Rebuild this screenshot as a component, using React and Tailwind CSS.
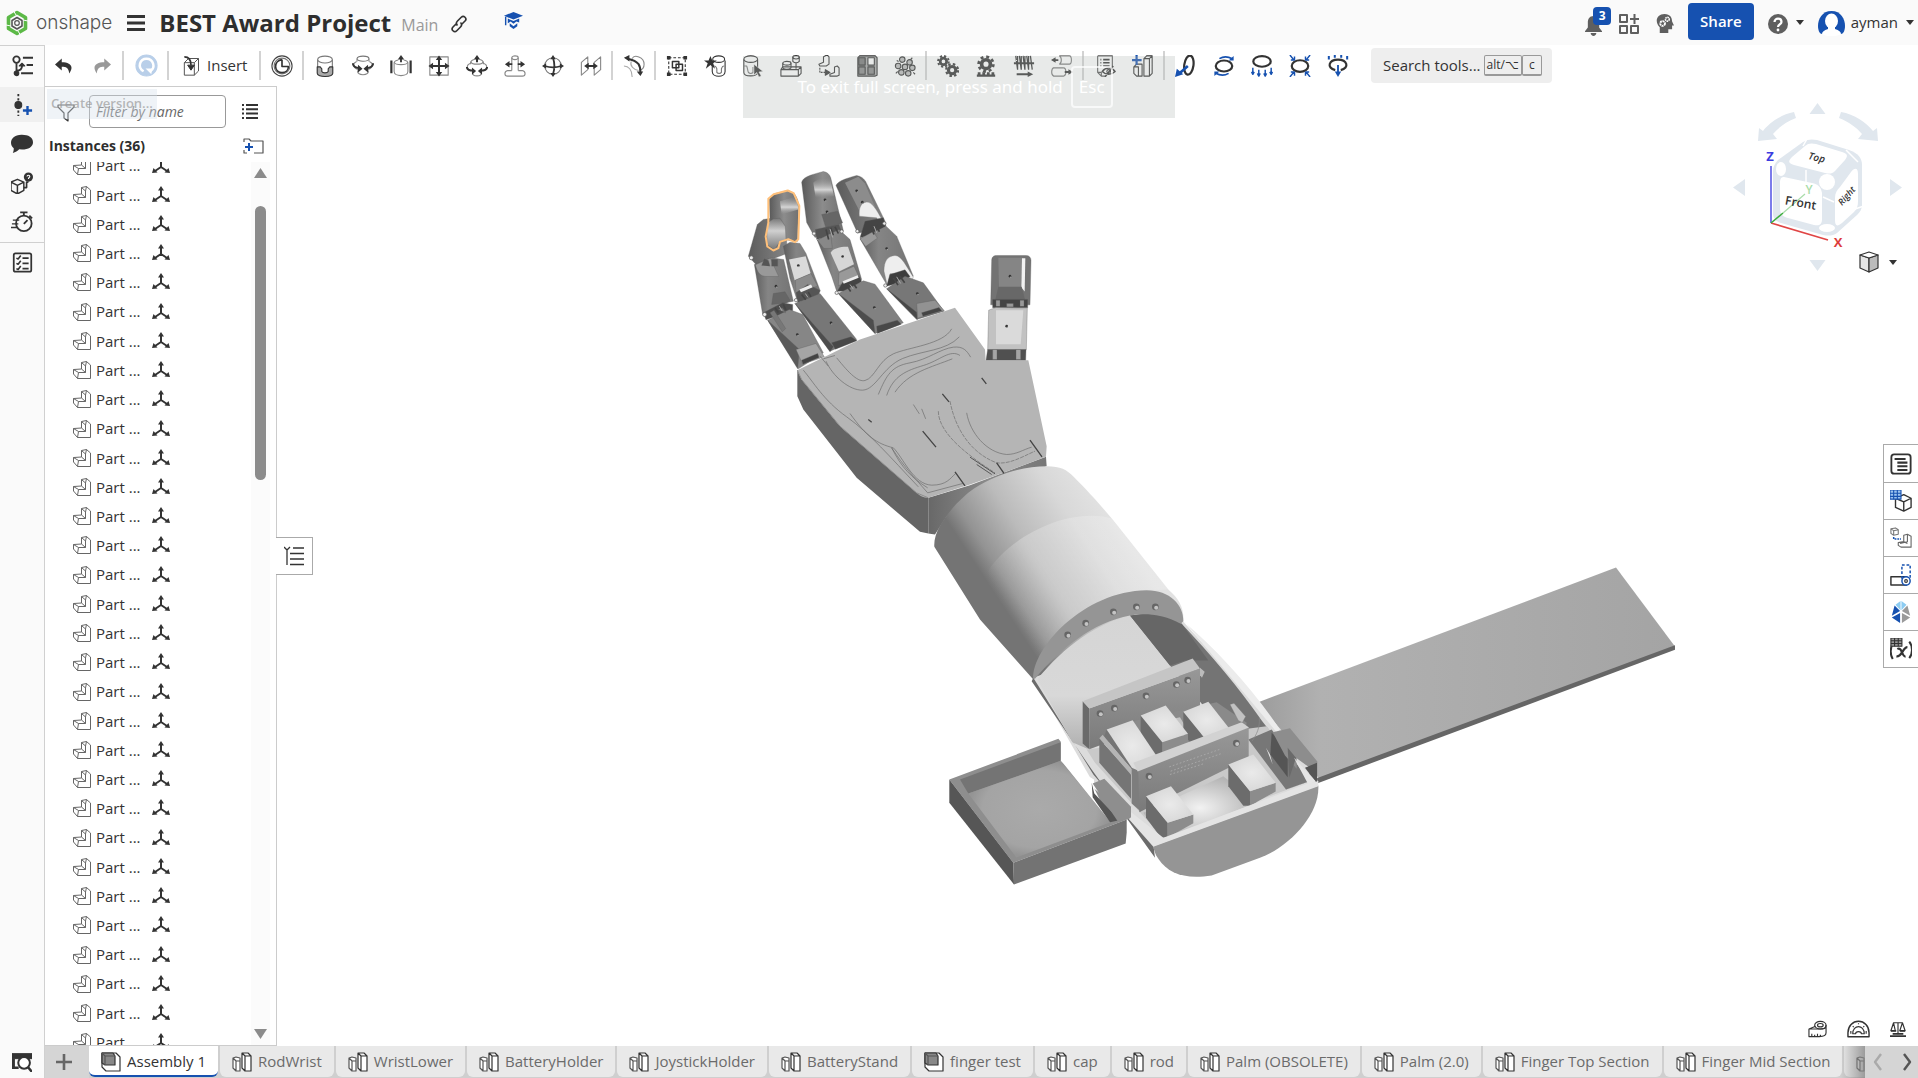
import React, { useState } from 'react';

const INK = '#333333';
const BLUE = '#1651b0';

const Svg = ({ children, className = 'size-6', box = '0 0 24 24' }) => (
  <svg
    viewBox={box}
    className={`shrink-0 ${className}`}
    fill="none"
    stroke={INK}
    strokeWidth="1.2"
    strokeLinejoin="round"
    aria-hidden="true"
  >
    {children}
  </svg>
);

const Caret = () => (
  <svg viewBox="0 0 8 5" className="h-[5px] w-2 shrink-0" fill={INK} aria-hidden="true">
    <path d="M0 0h8L4 5z" />
  </svg>
);

/* Toolbar icons */
const tools = [
  [
    ['Mate', <><circle cx="12" cy="12" r="11" stroke="#444" /><circle cx="12" cy="12" r="8.600" stroke="#777" /><path d="M12 5v7.500h7c0 9-14 9-14 0 0-4 3-7 7-7.500" strokeWidth="1.800" /></>],
  ],
  [
    ['Fastened mate', <><path d="M4 5v14c0 5 16 5 16 0V5" fill="#fff" stroke="#777" /><ellipse cx="12" cy="5" rx="8" ry="3.800" fill="#fff" stroke="#777" /><path d="M3.500 13h3c1 0 1 1.500 2 2v3c1 2 6 2 7 0v-3c1-.5 1-2 2-2h3v7c0 4.500-17 4.500-17 0z" fill="#aaa" /></>],
    ['Revolute mate', <><ellipse cx="12" cy="4" rx="6.500" ry="2.800" stroke="#777" /><path d="M5.500 4v3M18.500 4v3M6 17c0 6 12 6 12 0" stroke="#888" /><path d="M5 7c-6 3-3 8 3 9M19 7c6 3 3 8-3 9" stroke="#888" /><path d="M1 9c0 3 3 5 7 5.500M23 9c0 3-3 5-7 5.500" strokeWidth="2.200" /><path d="M6.500 10.500l5 4.500-5 4zM17.500 10.500l-5 4.500 5 4z" fill={INK} stroke="none" /></>],
    ['Slider mate', <><path d="M1.500 6v14M22.500 6v14" strokeWidth="2.400" /><path d="M4.500 8v10c0 6 15 6 15 0V8" stroke="#888" /><path d="M9 5.500c-6 1-6 5 3 5s9-4 3-5" stroke="#888" /><path d="M12 8V3" strokeWidth="2" /><path d="M12 0l3.500 5h-7z" fill={INK} stroke="none" /></>],
    ['Planar mate', <><path d="M2 2h20v20H2z" stroke="#888" /><path d="M12 5v14M5 12h14" strokeWidth="2.200" /><path d="M12 .5l3.500 5h-7zM12 23.500l3.500-5h-7zM.5 12l5-3.500v7zM23.500 12l-5-3.500v7z" fill={INK} stroke="none" /></>],
    ['Cylindrical mate', <><path d="M9 5c-5 1-5 5 3 5s8-4 3-5M5 7v3M19 7v3M7 19c0 5 10 5 10 0" stroke="#888" /><path d="M5 9c-6 2-4 8 3 8M19 9c6 2 4 8-3 8" stroke="#888" /><path d="M1 13c0 3 4 4 7 4M23 13c0 3-4 4-7 4M12 8V3" strokeWidth="2.200" /><path d="M12 0l3.500 5h-7zM6.500 13.500l4.500 4-4.500 4zM17.500 13.500l-4.500 4 4.500 4z" fill={INK} stroke="none" /></>],
    ['Pin slot mate', <><path d="M8.500 3v14M15.500 3v14M8.500 17H4c-4 1-4 6 0 6h16c4 0 4-5 0-6h-4.500" stroke="#888" /><ellipse cx="12" cy="3" rx="3.500" ry="2" stroke="#888" /><path d="M4 10h5M15 10h5" strokeWidth="2" /><path d="M1 10l5-3.500v7zM23 10l-5-3.500v7z" fill={INK} stroke="none" /></>],
    ['Ball mate', <><circle cx="12" cy="12" r="9" stroke="#777" /><path d="M12 3c2 6 2 12 0 18M3 12c6 2 12 2 18 0" strokeWidth="2" /><path d="M12 0l3 4.500H9zM12 24l3-4.500H9zM0 12l4.500-3v6zM24 12l-4.500-3v6z" fill={INK} stroke="none" /></>],
    ['Parallel mate', <><path d="M1.500 8l7-6v14l-7 6zM15.500 8l7-6v14l-7 6z" stroke="#888" /><path d="M8 12h8" strokeWidth="2.200" /><path d="M4.500 12l5-3.500v7zM19.500 12l-5-3.500v7z" fill={INK} stroke="none" /></>],
  ],
  [
    ['Tangent mate', <><path d="M1 12c5 0 9 4 9 12M9 7c-2 5 3 9 8 10" stroke="#aaa" /><path d="M10 4c2-5 13-2 13 6 0 4-2 6-5 6" stroke="#888" /><path d="M5 4c5 1 9 2 12 6 2 3 2 7 2 9" strokeWidth="2.200" /><path d="M1 3l6-3v7zM19 23l-4-5h7z" fill={INK} stroke="none" /></>],
  ],
  [
    ['Group', <><path d="M3 3h18v18H3z" strokeDasharray="3 2" /><path d="M7 7h7v7H7zM11 10h7v7h-7z" strokeWidth="1.600" /><path d="M1 1h4v4H1zM19 1h4v4h-4zM1 19h4v4H1zM19 19h4v4h-4z" fill={INK} stroke="none" /></>],
    ['Mate connector', <><path d="M9 6v12c0 7 14 7 14 0V6" /><ellipse cx="16" cy="4.500" rx="6.500" ry="3.500" /><path d="M11 12c3 0 2 2 3 3v4c1 1.500 4 1.500 5 0v-4c1-1 0-3 3-3" stroke="#777" /><path d="M7 1l2 5h5l-4 3 2 6-5-4-5 4 2-6-4-3h5z" fill={INK} stroke="none" /></>],
    ['Select', <><path d="M2 5v14c0 5 15 5 15 0V5" /><ellipse cx="9.500" cy="4.500" rx="7.500" ry="3.500" /><path d="M2 12h3c1 1 1 5 2 7 1 1.500 4 1.500 5 0v-6" stroke="#777" /><path d="M13 10l10 8-4.500.5L21 23l-2.500 1-2.500-5-3 3z" fill={INK} stroke="#fff" strokeWidth=".6" /></>],
    ['Snap mode', <><path d="M1 16l2-3h20v3M1 16h19v7H1zM20 16l3-3v7l-3 3" /><path d="M3 9v5c2 2 7 2 9 0V9" /><ellipse cx="7.500" cy="9" rx="4.500" ry="2" /><path d="M14 2v5c2 2 5 2 7 0V2M17.500 9v6" /><ellipse cx="17.500" cy="2.500" rx="3.500" ry="1.800" /></>],
    ['Replicate', <><path d="M1 10l5-2V2l4-2 2 2v8l-3 2H2zM13 21l5-2v-6l3-1 2 2v8l-2 1h-8z" /><path d="M2 14v5h7" strokeDasharray="2 1" /><path d="M13 19l-5-3v6z" fill={INK} /></>],
    ['Pattern', <><path d="M2 3l2-2h17l2 2v19l-2 1H2z" fill="#aaa" /><path d="M3 3h7v8H3z" fill="#777" /><path d="M13 3h7v8h-7z" fill="#fff" /><path d="M3 13h7v8H3zM13 13h7v8h-7z" fill="#888" /></>],
    ['Exploded view', <><g fill="#bbb"><circle cx="9" cy="5" r="3" /><circle cx="17" cy="8" r="3" /><circle cx="4.500" cy="12" r="3" /><circle cx="12" cy="13" r="3" /><circle cx="20" cy="14" r="3" /><circle cx="8" cy="19" r="3" /><circle cx="15.500" cy="20" r="3" /></g><path d="M3 6l2 1M20 3l-2 2M21 19l2 2M2 20l2-2" /></>],
  ],
  [
    ['Gear relation', <><circle cx="7" cy="7" r="3.500" strokeWidth="3" /><circle cx="7" cy="7" r="5.800" strokeWidth="2.200" strokeDasharray="2.400 2.150" /><circle cx="16.500" cy="16.500" r="4" strokeWidth="3.400" /><circle cx="16.500" cy="16.500" r="6.500" strokeWidth="2.400" strokeDasharray="2.700 2.400" /></>],
    ['Rack and pinion relation', <><circle cx="12" cy="10" r="4.800" strokeWidth="4" /><circle cx="12" cy="10" r="8" strokeWidth="3" strokeDasharray="3.200 3.080" /><path d="M2 22.500h20M3 20h3M8 20h3M13 20h3M18 20h3" strokeWidth="2.500" /></>],
    ['Screw relation', <><path d="M3 1l2 15M7 1l2 15M11 1l2 15M15 1l2 15M19 1l2 15M5 1v15M9 1v15M13 1v15M17 1v15" strokeWidth="1.400" /><path d="M1 9h22M4 21h14" strokeWidth="2" /><path d="M22 21l-6-3v6z" fill={INK} stroke="none" /></>],
    ['Linear relation', <><path d="M9 1h11c3 0 3 9 0 9H9M9 1c3 1 3 8 0 9M2 14h12M2 23h12M3 14c-3 1-3 8 0 9M14 14c3 1 3 8 0 9" stroke="#777" /><path d="M2 5.500h6M15 18.500h6" strokeWidth="2" /><path d="M0 5.500l5-3v6zM24 18.500l-5-3v6z" fill={INK} stroke="none" /></>],
  ],
  [
    ['Bill of materials', <><path d="M4 1h16v13M4 1v18l4 4h5M4 19h4v4" stroke="#555" /><path d="M7 5h1M10 5h7M7 8.500h1M10 8.500h7M7 12h1M10 12h7" strokeWidth="1.800" /><path d="M9 18c4-5 10-5 14 0-4 4-10 4-14 0zM12 24l9-12" strokeWidth="1.600" /><circle cx="16" cy="18" r="2" /></>],
    ['Insert part studio', <><path d="M2 13l3-3h6v13H5l-3-3zM2 13h5v10M13 4l3-3h6v19l-3 3h-6zM13 4h6v19M19 4l3-3" fill="#fff" /><path d="M5 0v11M-.5 5.500h11" stroke={BLUE} strokeWidth="2.400" /></>],
  ],
  [
    ['Section view', <><ellipse cx="15" cy="11" rx="5" ry="10.500" transform="rotate(8 15 12)" strokeWidth="2.400" /><path d="M14 12L5 20" stroke={BLUE} strokeWidth="2.800" /><path d="M0 24l2-9 7 6z" fill={BLUE} stroke="none" /></>],
    ['Rotate view', <><ellipse cx="12" cy="12" rx="9" ry="6" strokeWidth="2.400" /><path d="M7 4c5-3 10-2 14 0M17 20c-5 3-10 2-14 0" stroke={BLUE} strokeWidth="1.800" /><path d="M22.500 1v5h-5.500zM1.500 23v-5H7z" fill={BLUE} stroke="none" /></>],
    ['Gravity', <><ellipse cx="12" cy="7" rx="9.500" ry="5.800" strokeWidth="2.400" /><path d="M2 14v7M8.500 16v7M15.500 16v7M22 14v7M.5 18.500L2 21l1.500-2.500M7 20l1.500 3 1.500-3M14 20l1.500 3 1.500-3M20.500 18.500L22 21l1.500-2.500" stroke={BLUE} strokeWidth="1.600" /></>],
    ['Compress', <><ellipse cx="12" cy="12" rx="9" ry="6.300" strokeWidth="2.400" /><path d="M1 0l4 5M23 0l-4 5M1 24l4-5M23 24l-4-5M2 5.500h4V1.500M22 5.500h-4V1.500M2 18.500h4v4M22 18.500h-4v4" stroke={BLUE} strokeWidth="1.600" /></>],
    ['Force', <><path d="M9 16.500C-1 14 2 5 12 5s13 9 3 11.500" strokeWidth="2.400" /><path d="M2 1v4M8.500 0v3M15.500 0v3M22 1v4" stroke={BLUE} strokeWidth="2.200" /><path d="M12 11v9" stroke={BLUE} strokeWidth="2" /><path d="M12 24l-3.500-6h7z" fill={BLUE} stroke="none" /></>],
  ],
];

const Separator = () => <span className="ml-px mr-0.5 h-[29px] w-0.5 shrink-0 bg-[#d3d3d3]" />;

const ToolButton = ({ label, children, className = 'w-[38px] justify-center' }) => (
  <button type="button" aria-label={label} className={`flex h-9 shrink-0 items-center ${className}`}>
    {children}
  </button>
);

const Header = () => (
  <header className="flex h-[45px] shrink-0 items-center justify-between bg-[#fafafa] pl-1.5 pr-1">
    <div className="flex items-center">
      <a href="#home" className="flex items-center gap-2">
        <Svg className="h-[26px] w-[22px]" box="0 0 22 26">
          <path d="M11 2.500l8.500 5v11L11 23.500 2.500 18.500v-11z" stroke="#5cb947" strokeWidth="3.600" />
          <path d="M0 15l5 1M17 10l5 1M7 0l3 5M12 21l3 5" stroke="#fafafa" strokeWidth="1" />
          <path d="M11 7.500l5 3v5.500l-5 3-5-3v-5.500z" stroke="#555" strokeWidth="1.600" />
          <circle cx="11" cy="13" r="2.300" stroke="#555" strokeWidth="1.200" />
        </Svg>
        <span className="font-['Inter'] text-[19px] font-light leading-6 text-[#555]">onshape</span>
      </a>
      <button type="button" aria-label="Document menu" className="ml-[15px]">
        <Svg className="h-[18px] w-[18px]" box="0 0 18 18">
          <path d="M0 2.500h18M0 9h18M0 15.500h18" strokeWidth="3" />
        </Svg>
      </button>
      <h1 className="ml-3.5 text-2xl font-bold text-[#2e2e2e]">BEST Award Project</h1>
      <span className="ml-2.5 mt-1 text-base text-[#999]">Main</span>
      <button type="button" aria-label="Copy link" className="ml-3 mt-0.5">
        <Svg className="size-[18px]">
          <path d="M10 14c-2-2-2-4 0-6l5-5c2-2 4-1 5 0s2 3 0 5l-4 4M14 10c2 2 2 4 0 6l-5 5c-2 2-4 1-5 0s-2-3 0-5l4-4" strokeWidth="2.200" />
        </Svg>
      </button>
      <button type="button" aria-label="Learning center" className="ml-9 pb-1">
        <Svg className="size-[19px]" box="0 0 20 20">
          <g fill={BLUE} stroke="none">
            <path d="M10 1l10 4-10 4L0 5z" />
            <path d="M4 8l6 2.500L16 8v4l-3-1-3 2.500L7 11l-3 2zM6 13l4 3 4-3v3l-4 3-4-3zM1 6h1.500v9H1z" />
          </g>
        </Svg>
      </button>
    </div>
    <div className="flex items-center text-[#333]">
      <button type="button" aria-label="Notifications" className="relative mr-2 h-7 w-[26px]">
        <svg viewBox="0 0 18 22" className="mt-1.5 h-[21px] w-[17px]" fill="#5f5f5f" aria-hidden="true">
          <path d="M9 1c4 0 6 3 6 7v5l3 4v1H0v-1l3-4V8c0-4 2-7 6-7zM6 19h6c0 4-6 4-6 0z" />
        </svg>
        <span className="absolute -top-0.5 left-2 flex h-[18px] w-[18px] items-center justify-center rounded-sm bg-[#1651b0] text-xs font-bold text-white">
          3
        </span>
      </button>
      <button type="button" aria-label="App switcher" className="mr-4 mt-0.5">
        <Svg className="size-5" box="0 0 20 20">
          <path d="M1 1h7v7H1zM1 12h7v7H1zM12 12h7v7h-7zM15.500 0v10M11 5h9" stroke="#5f5f5f" strokeWidth="2" />
        </Svg>
      </button>
      <button type="button" aria-label="AI advisor" className="mr-3.5 mt-0.5">
        <Svg className="h-[21px] w-[19px]" box="0 0 20 22">
          <path d="M5 21v-6C-1 9 2 1 10 1c6 0 8 4 8 8l2 4h-2v4h-4v4z" fill="#5f5f5f" stroke="none" />
          <circle cx="8" cy="11" r="2.500" stroke="#fff" strokeWidth="2" strokeDasharray="2 .6" />
          <circle cx="13" cy="6.500" r="2" stroke="#fff" strokeWidth="1.600" strokeDasharray="1.600 .5" />
        </Svg>
      </button>
      <button type="button" className="mb-0.5 h-[37px] rounded bg-[#1651b0] px-3 text-[15px] font-semibold text-white">
        Share
      </button>
      <button type="button" aria-label="Help" className="ml-3.5 flex items-center gap-2">
        <svg viewBox="0 0 20 20" className="mt-0.5 size-5" aria-hidden="true">
          <circle cx="10" cy="10" r="10" fill="#5f5f5f" />
          <path d="M6.500 8c0-4.500 7-4.500 7 0 0 2.500-3.500 2-3.500 5" fill="none" stroke="#fff" strokeWidth="2.200" />
          <circle cx="10" cy="16" r="1.400" fill="#fff" />
        </svg>
        <Caret />
      </button>
      <button type="button" className="ml-3.5 flex items-center">
        <svg viewBox="0 0 27 26" className="mr-1.5 h-[26px] w-[27px]" aria-hidden="true">
          <path d="M13.500 1C23 1 27 9 27 16c0 5-2 8-4 8H4c-2 0-4-3-4-8C0 9 4 1 13.500 1z" fill={BLUE} />
          <ellipse cx="13.500" cy="11" rx="6.500" ry="7.500" fill="#fff" />
          <path d="M10 16h7v3c4 1 6 3 6 5-5 3-14 3-19 0 0-2 2-4 6-5z" fill="#fff" />
        </svg>
        <span className="mr-2 text-[15px]">ayman</span>
        <Caret />
      </button>
    </div>
  </header>
);

const Toolbar = () => (
  <div className="flex h-[41px] items-center overflow-hidden bg-white">
    <ToolButton label="Undo">
      <Svg className="h-[18px] w-5">
        <path d="M9 2L0 10l9 8v-5c6 0 9 1 10 9 7-10 1-15-10-15z" fill={INK} stroke="none" />
      </Svg>
    </ToolButton>
    <ToolButton label="Redo">
      <Svg className="h-[18px] w-5">
        <path d="M15 2l9 8-9 8v-5c-6 0-9 1-10 9C-2 12 4 7 15 7z" fill="#999" stroke="none" />
      </Svg>
    </ToolButton>
    <Separator />
    <ToolButton label="Update" className="w-10 justify-center">
      <Svg className="size-[23px]">
        <circle cx="12" cy="12" r="11" fill="#b9cfe9" stroke="#b9cfe9" />
        <path d="M9 18c-7-4-4-13 3-13s10 9 4 13" stroke="#fff" strokeWidth="2.600" />
        <path d="M11 15h7l-1 6z" fill="#fff" stroke="none" />
      </Svg>
    </ToolButton>
    <Separator />
    <ToolButton label="Insert parts" className="w-[87px] gap-1.5 pl-2.5">
      <Svg className="h-[22px] w-5">
        <path d="M4 8l5-5h12v15l-5 5H4zM4 8h12v15M16 8l5-5" stroke="#555" />
        <path d="M4 1c5 0 8 3 8 10" strokeWidth="2" />
        <path d="M12 17l-4-6h8z" fill={INK} />
      </Svg>
      <span className="text-[15px] text-[#333]">Insert</span>
    </ToolButton>
    {tools.map((group, i) => (
      <React.Fragment key={i}>
        <Separator />
        {group.map(([label, icon]) => (
          <ToolButton key={label} label={label}>
            <Svg className="size-[22px]">{icon}</Svg>
          </ToolButton>
        ))}
      </React.Fragment>
    ))}
    <button type="button" className="ml-3.5 flex h-[35px] shrink-0 items-center gap-[3px] rounded bg-[#eeeeee] pl-3 pr-2.5 text-[#333]">
      <span className="text-[15px]">Search tools...</span>
      <span className="flex text-xs">
        <kbd className="rounded-xs border border-b-2 border-[#999] px-0.5 font-['Open_Sans'] leading-[18px]">alt/⌥</kbd>
        <kbd className="rounded-xs border border-b-2 border-[#999] px-1.5 font-['Open_Sans'] leading-[18px]">c</kbd>
      </span>
    </button>
  </div>
);

const railItems = [
  ['Feature list', <><circle cx="6" cy="5" r="3.500" strokeWidth="2" /><path d="M6 9v13M6 17c5 0 6-2 6-5" strokeWidth="2" /><circle cx="6" cy="20" r="2.500" fill={INK} /><path d="M12 9l3 3h-6z" fill={INK} /><path d="M13 3h11M17 11h7M11 20h13" strokeWidth="2.200" /></>],
  ['Create version', <><path d="M8 0v24" strokeWidth="2" strokeDasharray="2.500 2" /><circle cx="8" cy="12" r="3.700" fill={INK} /><path d="M18 13v10M13 18h10" stroke={BLUE} strokeWidth="2.600" /></>],
  ['Comments', <path d="M12 2c7 0 12 3 12 8s-5 8-12 8l-3-.3c-2 2-4 3-7 4 1-2 1-4 1-5-6-5-3-15 9-14.700z" fill={INK} stroke="none" />],
  ['Help with parts', <><path d="M0 11l7-3 7 3v9l-7 4-7-4zM0 11l7 3.500 7-3.500M7 14.500V24" strokeWidth="1.600" /><path d="M14 17h3v-6h2" strokeWidth="1.800" /><circle cx="19" cy="5.500" r="5" fill={INK} stroke="none" /><path d="M17.500 5c0-2 3-2 3 0 0 1-1.500 1-1.500 2.500" stroke="#fff" /></>],
  ['Performance', <><circle cx="14" cy="13.500" r="8.500" strokeWidth="2" /><path d="M14 14l4-4M10 1.500h8M14 2v3M20 5l3 3" strokeWidth="2" /><path d="M2 10h7M1 14h7M0 18h7" strokeWidth="1.500" /></>],
];

const Rail = () => (
  <nav className="flex w-[45px] shrink-0 flex-col border-r border-t border-[#d0d0d0] bg-[#fafafa]">
    {railItems.map(([label, icon], i) => (
      <div key={label} className="flex h-[39px] items-center">
        <button
          type="button"
          aria-label={label}
          className={`flex h-[35px] w-full items-center justify-center ${i === 1 ? 'bg-[#f0f0f0]' : ''}`}
        >
          <Svg className="size-[22px]">{icon}</Svg>
        </button>
      </div>
    ))}
    <button type="button" aria-label="Checklist" className="mt-px flex h-[39px] items-center justify-center border-t border-[#d0d0d0]">
      <Svg className="size-[21px]">
        <rect x="2" y="1.500" width="20" height="21" rx="2" strokeWidth="2" />
        <path d="M5 7l2 1 3-4M5 13l2 1 3-4M5 19l2 1 3-4M12 7h7M12 13h7M12 19h7" strokeWidth="1.800" />
      </Svg>
    </button>
    <button type="button" aria-label="Tab manager" className="mt-auto flex h-8 items-center justify-center">
      <Svg className="size-5">
        <path d="M0 2h24v6H0z" fill={INK} />
        <path d="M0 3v16h8M2 8v11" strokeWidth="3" />
        <circle cx="14.500" cy="13" r="7" fill="#fff" strokeWidth="2.400" />
        <path d="M19 18l5 6" strokeWidth="3" />
      </Svg>
    </button>
  </nav>
);

const PartRow = () => (
  <li className="flex min-h-[29px] flex-1 items-center pl-7 text-[15px] text-[#333]">
    <Svg className="size-[18px]" box="0 0 18 18">
      <path d="M8.500 1.500l5-1L17.500 4v13.500h-13L.5 13V8.500l8-.5zM8.500 1.500l4 3.500v6.500h-7l-5-3M5.500 11.500l-1 6M12.500 5l1-4.500M12.500 11.500L8.500 8" stroke="#666" strokeWidth="1" />
    </Svg>
    <span className="ml-[5px] w-14">Part ...</span>
    <Svg className="size-[18px]" box="0 0 18 18">
      <path d="M9 3v8M9 10l-6 4M9 10l6 4" strokeWidth="2" />
      <path d="M9 0l3 4.500H6zM0 16l1.500-5 4 4.500zM18 16l-1.500-5-4 4.500z" fill={INK} stroke="none" />
    </Svg>
  </li>
);

const InstancePanel = () => {
  const [filter, setFilter] = useState('');
  return (
    <aside className="relative flex w-[232px] shrink-0 flex-col border-b border-r border-t border-[#cccccc] bg-white">
      <div className="flex h-12 items-center pl-3">
        <Svg className="mt-1 size-[18px]" box="0 0 18 18">
          <path d="M1 1h16v2l-6 6v8l-4-3V9L1 3z" stroke="#333" strokeWidth="1.200" />
        </Svg>
        <label htmlFor="filter" className="sr-only">Filter by name</label>
        <input
          id="filter"
          type="text"
          value={filter}
          onChange={(e) => setFilter(e.target.value)}
          placeholder="Filter by name"
          className="ml-3.5 h-[33px] w-[137px] rounded border border-[#999] bg-white px-1.5 text-sm italic text-[#333] placeholder-[#666] outline-none"
        />
        <button type="button" aria-label="List options" className="ml-4">
          <Svg className="h-[17px] w-4" box="0 0 16 17">
            <path d="M0 2h2M4 2h12M0 6.300h2M4 6.300h12M0 10.600h2M4 10.600h12M0 15h2M4 15h12" strokeWidth="2" />
          </Svg>
        </button>
      </div>
      <div className="mb-1.5 flex h-[21px] items-center justify-between pl-1 pr-3">
        <h2 className="text-sm font-bold text-[#2e2e2e]">Instances (36)</h2>
        <button type="button" aria-label="Add folder">
          <Svg className="h-4 w-[21px]" box="0 0 21 16">
            <path d="M1 4V1h5l2 2h12v12h-9M1 12v3h3" stroke="#555" />
            <path d="M6 5v8M2 9h8" stroke={BLUE} strokeWidth="2" />
          </Svg>
        </button>
      </div>
      <div className="flex min-h-0 flex-1 overflow-hidden">
        <ul className="-mb-3 -mt-[11px] flex flex-1 flex-col">
          {Array.from({ length: 31 }, (_, i) => <PartRow key={i} />)}
        </ul>
        <div className="mr-1.5 flex w-[19px] flex-col items-center bg-[#fbfbfb] py-1.5">
          <svg viewBox="0 0 13 10" className="h-2.5 w-[13px]" fill="#8b8b8b" aria-hidden="true"><path d="M6.500 0L13 10H0z" /></svg>
          <span className="mt-7 h-[274px] w-[11px] rounded-full bg-[#8b8b8b]" />
          <svg viewBox="0 0 13 10" className="mt-auto h-2.5 w-[13px]" fill="#8b8b8b" aria-hidden="true"><path d="M6.500 10L13 0H0z" /></svg>
        </div>
      </div>
      <div className="pointer-events-none absolute left-0.5 top-0.5 flex h-[30px] items-center bg-[#d8e2ea]/40 px-1 text-[13px] font-semibold text-[#999]/70">
        Create version...
      </div>
      <button
        type="button"
        aria-label="Collapse list"
        className="absolute left-full top-[450px] flex h-[38px] w-[37px] items-center justify-center border border-l-0 border-[#aaa] bg-white"
      >
        <Svg className="size-5" box="0 0 20 20">
          <path d="M0 1l3 3 3-3M3 4v15M9 2h11M6 7.500h14M6 13h14M6 18.500h14" strokeWidth="1.300" />
        </Svg>
      </button>
    </aside>
  );
};

/* Shaded 3D model of the prosthetic arm */
const Hole = ({ x, y, r = 10 }) => (
  <g>
    <circle cx={x} cy={y} r={r} fill="#666" />
    <circle cx={x + r / 4} cy={y + r / 4} r={r * 0.6} fill="#c4c4c4" />
  </g>
);

const Pin = ({ x, y }) => (
  <g>
    <circle cx={x} cy={y} r="4" fill="#333" />
    <circle cx={x + 2} cy={y + 3} r="2" fill="#aaa" />
  </g>
);

const Block = ({ x, y, h = 26 }) => (
  <g transform={`translate(${x} ${y})`}>
    <path d={`M0 30L65 110V${110 + h + 18}L45 ${110 + h + 18}L0 95z`} fill="#6c6c6c" />
    <path d={`M65 110L142 85V${85 + h}L65 ${110 + h + 18}z`} fill="#8c8c8c" />
    <path d="M0 30L75 0l67 85-77 25z" fill="url(#blockTop)" />
  </g>
);

const HandModel = () => (
  <g transform="translate(720 150) scale(.33333)">
    <g stroke="#5a5a5a" strokeWidth="1" strokeLinejoin="round">
      {/* little finger */}
      <path d="M112 225l18-15 50-8 20 20 0 90-90 35-25-27z" fill="url(#darkSide)" />
      <path d="M148 150c5-12 12-17 22-19l35-8 17 8c10 14 14 25 14 40l-4 105-35-5-22 10-25-75z" fill="url(#tip)" />
      <path d="M180 155l50-15 5 40-50 15z" fill="url(#shine)" stroke="none" />
      <path d="M140 222l20-14 20-2 16 25 2 40-20 8-15 22-22-16z" fill="url(#tip2)" />
      <path d="M103 345l50-20 38 5 29 125-35 8-57 32z" fill="url(#phal)" />
      <path d="M106 346l45-20 25 55h-35c-20 0-28-10-35-35z" fill="#999" />
      <path d="M125 348l8-20 12 5 5 17M155 350v-20h18v20" fill="#555" />
      <path d="M160 432l35-5 15 25-10 8-45 5z" fill="#666" />
      <path d="M130 490l58-30 30 5 0 18-80 28z" fill="#4d4d4d" />
      <path d="M143 512l65-32 40 15 62 115-75 48z" fill="#868686" />
      <path d="M143 512l95 88-5 58z" fill="#5a5a5a" />
      <path d="M150 490l12-8 35 55-10 10zM175 480l12-5 10 15z" fill="#777" />
      <path d="M228 600l60-18 25 40-65 22z" fill="#a5a5a5" />
      <path d="M245 632l48-20 4 12-48 20z" fill="#444" />
      {/* ring finger */}
      <path d="M190 290l20-12 30 4 18 30 42 110-70 26-20-60z" fill="url(#phal)" />
      <path d="M207 330l50-10 15 52-48 20z" fill="#dadada" stroke="none" />
      <path d="M226 392l47-20 20 38-65 20z" fill="#8c8c8c" />
      <path d="M228 430l35-25 38 18-8 18-60 18z" fill="#555" />
      <path d="M238 420l35-15 5 8-35 15z" fill="#eee" stroke="none" />
      <path d="M225 462l75-30 110 138-80 35z" fill="#777" />
      <path d="M225 462l115 130-10 15z" fill="#4d4d4d" />
      <path d="M335 580l58-18 18 12-65 25z" fill="#484848" />
      {/* middle finger */}
      <path d="M245 98c5-15 20-20 65-32 12 2 18 8 22 18l38 160-35-5-50 25-25-45z" fill="url(#tip)" />
      <path d="M280 100c5-8 25-15 50-15l12 55-55 5z" fill="url(#shine)" stroke="none" />
      <path d="M305 195l48-10 15 35-50 15z" fill="#666" />
      <path d="M290 270l-4-30 70-15 10 25z" fill="#555" />
      <path d="M292 272l65-32 33 30 35 120-75 35-15-45z" fill="url(#phal)" />
      <path d="M292 272l40-20 5 45h-25z" fill="#888" />
      <path d="M332 310c5-15 40-20 52-18l18 52-45 22z" fill="#d6d6d6" stroke="none" />
      <path d="M357 370l45-20 18 40-65 18z" fill="#999" />
      <path d="M352 425l15-25 50-20 8 15-35 30z" fill="#444" />
      <path d="M368 395l45-18 3 8-45 18z" fill="#eee" stroke="none" />
      <path d="M355 432l75-38 35 10 85 116-85 32z" fill="#818181" />
      <path d="M355 432l105 80 5 40z" fill="#4d4d4d" />
      <path d="M470 530l62-18 12 12-72 28z" fill="#484848" />
      {/* index finger */}
      <path d="M348 108c5-12 25-20 62-30 12 2 20 8 27 18l61 125-20 15-65 15z" fill="url(#darkSide)" />
      <path d="M375 100l40-18 20 20 30 70-40 25z" fill="#8c8c8c" stroke="none" />
      <path d="M418 200c-2-25 5-40 20-42 18-2 30 20 52 60l-8 12-12-25z" fill="#eee" stroke="#777" />
      <path d="M420 265l15-50 55-10 8 25-40 25z" fill="#444" />
      <path d="M420 268l78-38 32 30 50 120-30 20-50 5z" fill="url(#phal)" />
      <path d="M420 268l40-22 12 20-35 25z" fill="#999" />
      <path d="M492 365c0-30 10-45 33-47 20 0 35 35 55 65l-10 18-15-30-45 2-8 35z" fill="#eee" stroke="#777" />
      <path d="M500 410l10-35 45-14 15 20-20 15z" fill="#3d3d3d" />
      <path d="M500 418l55-38 55 20 62 85-82 25z" fill="#777" />
      <path d="M500 418l90 70 2 22z" fill="#484848" />
      <path d="M590 462l55-10 28 32-80 22z" fill="#929292" />
      <path d="M605 490l52-16 8 10-56 16z" fill="#444" />
      {/* joint details */}
      <path d="M318 240l8 30M332 235l8 22M345 232l10 20M452 230l10 25M470 225l8 22M520 385l14 22M540 380l14 20M165 475l10 14M190 465l8 16M380 408l12 18M400 402l10 14M245 435l12 16M265 428l8 14" strokeWidth="5" stroke="#444" />
      <path d="M330 238l8 26M462 230l8 20M530 382l12 20M178 470l8 14M390 405l10 14M256 432l8 12" strokeWidth="3" stroke="#aaa" />
      {/* thumb */}
      <path d="M815 335c0-12 5-17 15-17h88c10 0 15 6 15 15l-3 133-118 0z" fill="#737373" />
      <path d="M835 325h75l-8 88h-65z" fill="#858585" stroke="none" />
      <path d="M906 326l10 0-2 100-10-12z" fill="#f2f2f2" stroke="none" />
      <path d="M835 412h70l10 38-90 5z" fill="#686868" stroke="none" />
      <path d="M818 450h105v25H818z" fill="#444" />
      <path d="M828 470v-18h12v18M900 470v-18h12v18M860 472v-10h20v10" fill="#999" />
      <path d="M806 482l22-8 94 2-3 125H803z" fill="#c2c2c2" />
      <path d="M828 482h82l-8 102h-74z" fill="#dadada" stroke="none" />
      <path d="M803 600h115l-1 33H798z" fill="#505050" />
      <path d="M818 600h13v30h-13zM888 600h14v30h-14z" fill="#a5a5a5" />
    </g>
    <Pin x={315} y={151} /><Pin x={321} y={187} /><Pin x={410} y={124} /><Pin x={427} y={158} />
    <Pin x={235} y={348} /><Pin x={368} y={321} /><Pin x={500} y={297} /><Pin x={168} y={410} />
    <Pin x={232} y={555} /><Pin x={333} y={520} /><Pin x={463} y={474} /><Pin x={592} y={432} />
    <Pin x={870} y={380} /><Pin x={860} y={530} />
    <g fill="#eee" stroke="#555" strokeWidth="2">
      <circle cx="94" cy="325" r="6" /><circle cx="134" cy="495" r="6" /><circle cx="228" cy="452" r="5" />
      <circle cx="282" cy="252" r="5" /><circle cx="350" cy="430" r="5" /><circle cx="412" cy="245" r="5" />
      <circle cx="496" cy="408" r="5" /><circle cx="493" cy="222" r="5" /><circle cx="365" cy="246" r="5" />
    </g>
    {/* selected fingertip */}
    <path
      d="M145 148l16-14 42-11 18 8 17 38-3 100-10 9-20-9-25 8-5 19-15 7-18-12-5-30 8-40z"
      fill="none"
      stroke="#ffc07a"
      strokeWidth="6"
      strokeLinejoin="round"
    />
    {/* palm */}
    <path d="M232 662l13 28L360 830l230 200 35 15v107l-25-5-190-162L250 780l-18-40z" fill="#656565" />
    <path d="M625 1045l125-38 228-85 2 28-200 80-100 70-35 55-20-3z" fill="url(#palmFront)" />
    <path d="M232 662l188-92 285-95 90 125 2 32h128l55 258-2 32-128 48-100 35-125 40c-15 0-25-5-35-15L360 830 245 690z" fill="#b5b5b5" />
    <path d="M232 662l13 28 115 140 230 200 35 15" fill="none" stroke="#8e8e8e" strokeWidth="3" />
    <g fill="none" stroke="#6b6b6b" strokeWidth="2">
      <path d="M350 625c40 50 65 73 85 68 30-8 40-60 85-80s150-28 175-75" />
      <path d="M318 635c20 45 70 88 110 87 40-2 60-70 120-95s130-22 170-65" />
      <path d="M475 735c25-60 40-85 95-95s90-42 130-47c30-3 40 10 52 30" />
      <path d="M500 738c20-60 60-75 110-90s80-50 110-30M525 728c40-60 110-75 172-100" />
      <path d="M250 662c30 35 60 90 130 140s130 120 215 210" />
      <path d="M390 792c50 70 80 90 130 103 30 30 60 110 115 112 45 0 55-20 72-35" />
      <path d="M515 895c40 60 60 80 108 135l105-28M515 895c30 60 60 90 108 120" />
      <path d="M655 785c0 70 100 140 170 185M690 755c15 80 60 155 140 185 40 5 80-20 115-35" strokeDasharray="12 3" />
      <path d="M740 790c10 60 60 120 120 125 30 0 50-15 75-22" />
      <path d="M300 620l25 30M310 628l35-10M580 765l18 28M605 778l12 30" />
    </g>
    <g stroke="#444" strokeWidth="4">
      <path d="M667 733l20 24M608 845l40 48M785 685l14 18M930 872l36 50M705 967l30 42M830 940l22 32M445 810l10 8" />
      <path d="M750 923l75 50M770 945l45 30" strokeWidth="2.500" />
    </g>
  </g>
);

const ForearmModel = () => (
  <g transform="translate(900 450) scale(.33333)">
    {/* arm strap */}
    <path d="M1075 758l1073-404 177 237-1065 400z" fill="url(#strap)" />
    <path d="M1250 986l1075-399v14l-1072 400z" fill="#666" />
    {/* sleeve */}
    <path d="M103 292c-5-60 70-140 118-174 70-45 150-68 220-68 40 0 60 10 80 32 50 50 80 85 119 130l165 208c35 30 48 60 45 97L400 690 240 510z" fill="url(#sleeve)" />
    <path d="M262 368c60-100 240-200 378-160l165 212-65 3c-160 0-290 130-335 245z" fill="url(#sleeveLight)" />
    {/* enclosure */}
    <path d="M400 685l450-168 290 320 115 160-110 150-385 45-185-200z" fill="#dcdcdc" />
    <path d="M400 685l-5 10 180 265 190 265-5-40-180-210z" fill="#6b6b6b" />
    <path d="M412 690c80-100 180-170 280-192l120 150 60 60-310 190-45-20z" fill="url(#floor)" />
    <path d="M690 498c60-10 110-5 155 25 90 95 170 190 240 290l143 182-63 22-190-170-165-199z" fill="#747474" />
    <path d="M690 498c60-10 110-5 155 25l80 110-70 0-45 15z" fill="#666" />
    <path d="M855 518l275 330 10-8C1060 720 950 600 850 515z" fill="#ececec" />
    <path d="M560 900l540-70 130 165-445 165-200-220z" fill="#c9c9c9" />
    <path d="M1045 870l70-30 113 155-70 25z" fill="#777" />
    <path d="M730 1090l240-110 100 80-285 110z" fill="url(#glow)" />
    {/* ring face */}
    <path d="M400 688c-5-90 150-264 340-266 70 0 112 45 110 93l-8 8c-50-30-110-33-152-25-110 20-210 100-285 190z" fill="#959595" />
    <Hole x={503} y={556} /><Hole x={557} y={521} /><Hole x={640} y={487} /><Hole x={709} y={472} /><Hole x={766} y={472} />
    {/* rear plate */}
    <path d="M548 755l20 22v122l-20-17z" fill="#6a6a6a" />
    <path d="M568 777l332-120v120L568 899z" fill="url(#plate)" />
    <path d="M548 755l330-128 22 30-332 120z" fill="#c5c5c5" />
    <path d="M900 655l14 12-8 18-6-8z" fill="#bbb" />
    <Hole x={600} y={792} /><Hole x={643} y={776} /><Hole x={738} y={739} /><Hole x={829} y={705} /><Hole x={863} y={692} />
    <path d="M620 860l90-48 240-54 90 62-10 60-310 90z" fill="#8a8a8a" />
    <path d="M820 808l20-5 35 60-22 5z" fill="#c4c4c4" />
    <Block x={850} y={757} /><Block x={722} y={768} />
    <path d="M620 840l82 105v22l-90-105z" fill="#757575" />
    <path d="M620 840l78-28 75 112-70 42z" fill="url(#blockTop)" />
    {/* front plate */}
    <path d="M598 868l95 105v75l-95-108z" fill="#757575" />
    <path d="M598 866l10-10 92 110-7 10z" fill="#b5b5b5" />
    <path d="M695 955l28 12v120l-28-25z" fill="#7d7d7d" />
    <path d="M715 965l331-132v92L718 1088z" fill="url(#plate)" />
    <path d="M700 940l325-122 22 16-334 132z" fill="#d2d2d2" />
    <Hole x={747} y={980} /><Hole x={1009} y={881} />
    <path d="M808 952l150-52M812 965l150-52M810 975l100-32" stroke="#a8a8a8" strokeWidth="3" strokeDasharray="5 6" fill="none" />
    <path d="M990 765l12-4 35 40-10 18-12-6z" fill="#c2c2c2" stroke="#777" />
    <path d="M1078 805c2 30-8 50-22 70" stroke="#888" fill="none" strokeWidth="2" />
    <Block x={985} y={915} /><Block x={738} y={1010} />
    {/* strap hinge */}
    <path d="M1115 850l48 45v88l-52-68z" fill="#555" />
    <path d="M1118 848l52-12 82 100v60l-24-22v-20l-38-28v32l-35-40z" fill="#8d8d8d" />
    <path d="M1163 895l25 30-20 60z" fill="#6a6a6a" />
    <path d="M1215 955l36-15v62z" fill="#555" />
    <path d="M1098 895l20 50-8-30zM1182 925l65 70-22 10z" fill="#e5e5e5" />
    {/* end cap */}
    <path d="M760 1190l495-182c5 90-90 185-175 217l-145 53c-80 12-130-5-160-50-10-15-13-25-15-38z" fill="#959595" />
    <path d="M690 1085l100 80 440-165 25-5v15l-495 182-75-85z" fill="#e4e4e4" />
    {/* battery tray */}
    <path d="M148 990l327-122 7 8v58l208 172-350 134z" fill="#8e8e8e" />
    <path d="M180 990l302-112v56l-277 98z" fill="#747474" />
    <path d="M205 1032l277-98 150 184-283 106z" fill="url(#tray)" />
    <path d="M148 990l192 250 2 65-194-245z" fill="#565656" />
    <path d="M340 1240l340-130v40l-3 32-335 123z" fill="#737373" />
    <path d="M482 932l100 58v25l50 103z" fill="#fff" />
    <path d="M575 1000l8 32 75 80-28 6-52-75z" fill="#555" />
    <path d="M578 1002l35-14 80 84v32l-38 14z" fill="#8e8e8e" />
  </g>
);

const Model = () => (
  <svg viewBox="277 87 1641 959" className="h-full w-full" role="img" aria-label="Arm assembly">
    <defs>
      <linearGradient id="darkSide"><stop offset="0" stopColor="#5c5c5c" /><stop offset="1" stopColor="#858585" /></linearGradient>
      <linearGradient id="phal"><stop offset="0" stopColor="#5e5e5e" /><stop offset=".35" stopColor="#858585" /><stop offset="1" stopColor="#747474" /></linearGradient>
      <linearGradient id="tip" x1="0" x2="1"><stop offset="0" stopColor="#5a5a5a" /><stop offset=".5" stopColor="#8c8c8c" /><stop offset="1" stopColor="#717171" /></linearGradient>
      <linearGradient id="tip2" x1="0" y1="0" x2="0" y2="1"><stop offset="0" stopColor="#777" /><stop offset=".4" stopColor="#d0d0d0" /><stop offset="1" stopColor="#777" /></linearGradient>
      <linearGradient id="shine" x1="0" y1="0" x2="0" y2="1"><stop offset="0" stopColor="#999" stopOpacity="0" /><stop offset=".6" stopColor="#d5d5d5" /><stop offset="1" stopColor="#999" stopOpacity="0" /></linearGradient>
      <linearGradient id="palmFront"><stop offset="0" stopColor="#686868" /><stop offset=".5" stopColor="#8a8a8a" /><stop offset="1" stopColor="#777" /></linearGradient>
      <linearGradient id="sleeve" gradientUnits="userSpaceOnUse" x1="250" y1="380" x2="600" y2="150">
        <stop offset="0" stopColor="#747474" /><stop offset=".12" stopColor="#939393" /><stop offset=".4" stopColor="#bbbbbb" /><stop offset=".75" stopColor="#d8d8d8" /><stop offset="1" stopColor="#e2e2e2" />
      </linearGradient>
      <linearGradient id="sleeveLight" gradientUnits="userSpaceOnUse" x1="270" y1="390" x2="500" y2="240">
        <stop offset="0" stopColor="#fff" stopOpacity="0" /><stop offset=".5" stopColor="#fff" stopOpacity=".25" /><stop offset="1" stopColor="#fff" stopOpacity=".2" />
      </linearGradient>
      <linearGradient id="floor" x1="0" y1="0" x2="0" y2="1"><stop offset="0" stopColor="#d5d5d5" /><stop offset=".6" stopColor="#d8d8d8" /><stop offset="1" stopColor="#b0b0b0" /></linearGradient>
      <linearGradient id="plate" x1="0" y1="0" x2="0" y2="1"><stop offset="0" stopColor="#989898" /><stop offset="1" stopColor="#7a7a7a" /></linearGradient>
      <linearGradient id="strap" x1="0" x2="1"><stop offset="0" stopColor="#9c9c9c" /><stop offset=".15" stopColor="#b1b1b1" /><stop offset="1" stopColor="#a4a4a4" /></linearGradient>
      <radialGradient id="blockTop"><stop offset="0" stopColor="#eaeaea" /><stop offset="1" stopColor="#d9d9d9" /></radialGradient>
      <radialGradient id="glow"><stop offset="0" stopColor="#f2f2f2" /><stop offset="1" stopColor="#b5b5b5" /></radialGradient>
      <radialGradient id="tray"><stop offset="0" stopColor="#aaaaaa" /><stop offset=".8" stopColor="#a4a4a4" /><stop offset="1" stopColor="#949494" /></radialGradient>
    </defs>
    <HandModel />
    <ForearmModel />
  </svg>
);

const ViewCube = () => (
  <div className="absolute right-3.5 top-[13px] flex flex-col items-end">
    <svg viewBox="1730 99 174 176" className="h-44 w-[174px]" role="img" aria-label="View cube">
      <g fill="#e0e7ee">
        <path d="M1817.500 103l8 11h-16zM1817.500 271l8-11h-16zM1733 187.500l12-8.500v17zM1902 187.500l-12-8.500v17z" />
        <path d="M1794 112l2 6c-10 4-17 9-23 16l4 5-19 2 1-13 4 3c6-8 19-17 31-19zM1841 112l-2 6c10 4 17 9 23 16l-4 5 20 2-1-13-4 3c-6-8-19-17-32-19z" />
      </g>
      <path d="M1803 142c5-3 9-3 14-2l32 10c9 3 13 8 13 15v40c0 4-2 7-5 10l-20 18c-4 3-9 3-14 2l-42-12c-6-2-8-5-8-10v-42c0-4 2-8 5-11z" fill="#e0e7ee" />
      <g fill="#fff">
        <path d="M1805 146c3-3 7-3 11-2l26 8c6 2 6 4 3 8l-10 11c-3 3-6 3-10 2l-31-8c-6-2-6-4-2-8z" />
        <path d="M1784 177l28 6c6 1 9 4 10 10v26c0 6-3 7-8 6l-26-7c-5-1-8-4-8-10v-25c0-4 1-6 4-6z" />
        <path d="M1840 187l11-15c4-5 7-4 7 2v27c0 5-1 8-4 11l-12 11c-5 4-7 3-7-3v-22c0-5 2-8 5-11z" />
        <ellipse cx="1827" cy="182" rx="8" ry="8" /><ellipse cx="1781" cy="169" rx="5" ry="7" /><ellipse cx="1827" cy="228" rx="8" ry="4" />
      </g>
      <path d="M1803 146l4-7M1806 170v12M1823 197l11 5M1846 150l12 12M1855 209l9-3" stroke="#fff" strokeWidth="1.500" />
      <path d="M1771 223v-57" stroke="#5b5be6" strokeWidth="1.600" />
      <path d="M1771 223l57 17" stroke="#e04545" strokeWidth="1.600" />
      <path d="M1771 223l12-10" stroke="#3cae3c" strokeWidth="1.600" />
      <path d="M1783 213l22-19" stroke="#a9dca9" strokeWidth="1.200" />
      <g fontFamily="Open Sans, sans-serif" textAnchor="middle" fontWeight="600" fill="#333">
        <text x="1770" y="161" fontSize="13" fontWeight="700" fill="#3c3ce0">Z</text>
        <text x="1838" y="247" fontSize="13" fontWeight="700" fill="#dd3c3c">X</text>
        <text x="1809" y="194" fontSize="12" fill="#a9dca9">Y</text>
        <text fontSize="12" transform="translate(1800 207) rotate(10)">Front</text>
        <text fontSize="10" fontStyle="italic" transform="translate(1816 161) rotate(14)">Top</text>
        <text fontSize="9" fontStyle="italic" transform="translate(1849 198) rotate(-48)">Right</text>
      </g>
    </svg>
    <button type="button" aria-label="View options" className="-mt-6 mr-[7px] flex items-center gap-2.5">
      <Svg className="h-[22px] w-5" box="0 0 20 22">
        <path d="M1 4l9 3v14l-9-4z" fill="#e5e5e5" /><path d="M10 7l9-3v13l-9 4z" fill="#bbb" /><path d="M1 4l9-3 9 3-9 3z" fill="#fff" />
      </Svg>
      <Caret />
    </button>
  </div>
);

const sideIcons = [
  ['Properties', <><rect x="1.500" y="1.500" width="21" height="21" rx="3" strokeWidth="2" /><path d="M5 6.500h12M8 10.500h11M8 14.500h11M8 18.500h11" strokeWidth="2.200" /></>],
  ['BOM table', <><path d="M6 9l9-4 8 4v10l-8 4-9-4zM6 9l9 4 8-4M15 13v10" strokeWidth="1.500" /><path d="M0 0h12v10H0z" fill="#9cc4f0" stroke={BLUE} /><path d="M4 0v10M8 0v10M0 3.500h12M0 7h12" stroke={BLUE} /></>],
  ['Configurations', <><path d="M1 2l5-1 3 2v5l-5 1-3-2zM1 2l3 2v5M4 4l5-1" stroke="#777" /><path d="M9 17l6-1V9l4-1 4 2v12H12l-3-2zM15 16l4 2M19 8v8l-8 2" stroke="#666" /><path d="M4 11v2h8" stroke={BLUE} strokeDasharray="2 1" strokeWidth="1.600" /></>],
  ['Named positions', <><path d="M1 14h17v9H1z" strokeWidth="1.600" /><path d="M13 16V1h9v15" stroke={BLUE} strokeWidth="1.600" strokeDasharray="3 2" /><circle cx="17.500" cy="18.500" r="4.500" fill="#fff" stroke={BLUE} strokeWidth="1.600" /><circle cx="17.500" cy="18.500" r="1.500" /></>],
  ['Appearances', <g stroke="none"><path d="M11.500 0v10L6 4zM12.500 0v10L18 4z" fill="#8cccf2" /><path d="M5 5l6 6-9 5zM2 18l9-5v11z" fill={BLUE} /><path d="M19 5l-6 6 9 5zM22 18l-9-5v11z" fill="#9a9a9a" /></g>],
  ['Variable table', <><path d="M3 6c-3 5-3 12 0 17M21 4c4 5 4 13 0 18" strokeWidth="2.200" /><path d="M8 12c5-3 5 9 9 8M19 10c-5 0-6 11-12 10" strokeWidth="2.400" /><path d="M1 0h12v9H1z" fill="#999" /><path d="M5 0v9M9 0v9M1 3h12M1 6h12" /></>],
];

const Viewport = () => (
  <main className="relative min-w-0 flex-1 overflow-hidden">
    <Model />
    <ViewCube />
    <div className="absolute right-0 top-[358px] border border-r-0 border-[#aaa] bg-white">
      {sideIcons.map(([label, icon], i) => (
        <button
          key={label}
          type="button"
          aria-label={label}
          className={`flex h-[37px] w-[34px] items-center justify-center border-[#aaa] ${i > 0 ? 'border-t' : ''}`}
        >
          <Svg className="size-[22px]">{icon}</Svg>
        </button>
      ))}
    </div>
    <div className="absolute bottom-2 right-3 flex items-center gap-5">
      <button type="button" aria-label="Measure">
        <Svg className="h-[18px] w-[19px]" box="0 0 20 18">
          <path d="M1 9l7-3M1 9h11c5 0 7 0 7-4v8c0 3-3 4-7 4H1zM4 17v-3M7 17v-2M10 17v-3M13 17v-2" /><ellipse cx="13" cy="5" rx="6" ry="4" /><ellipse cx="13" cy="5" rx="3" ry="1.800" />
        </Svg>
      </button>
      <button type="button" aria-label="Angle">
        <Svg className="h-[18px] w-[23px]" box="0 0 24 18">
          <path d="M1 17v-4C1 6 6 1 12 1s11 5 11 12v4z" strokeWidth="1.500" /><path d="M6 14c0-10 12-10 12 0h-3c0-3-6-3-6 0z" /><path d="M4 14v-3M6 6l1 1M12 3v1M18 6l-1 1M20 14v-3" />
        </Svg>
      </button>
      <button type="button" aria-label="Mass properties">
        <Svg className="h-[18px] w-4" box="0 0 18 18">
          <path d="M4 2h10M9 2v13M4 2l-3 9h5zM14 2l-3 9h6z" strokeWidth="1.300" /><path d="M1 11h6M11 11h6M0 17h18M3 14.500h12" strokeWidth="2" />
        </Svg>
      </button>
    </div>
  </main>
);

const tabs = [
  ['Assembly 1', 'assembly'],
  ['RodWrist', 'studio'],
  ['WristLower', 'studio'],
  ['BatteryHolder', 'studio'],
  ['JoystickHolder', 'studio'],
  ['BatteryStand', 'studio'],
  ['finger test', 'assembly'],
  ['cap', 'studio'],
  ['rod', 'studio'],
  ['Palm (OBSOLETE)', 'studio'],
  ['Palm (2.0)', 'studio'],
  ['Finger Top Section', 'studio'],
  ['Finger Mid Section', 'studio'],
];

const TabIcon = ({ kind }) =>
  kind === 'assembly' ? (
    <Svg className="size-5" box="0 0 20 20">
      <path d="M1 1h14l4 4v14H5l-4-4z" fill="#fff" />
      <path d="M1 1h11l2 3v9H4l-3-2z" fill="#888" /><path d="M1 1l3 3h10M4 4v9" stroke="#555" />
    </Svg>
  ) : (
    <Svg className="size-5" box="0 0 20 20">
      <path d="M1 6l3-1 4 1v13H4l-3-3zM1 6l3 3h4M4 9v10" fill="#fff" stroke="#555" />
      <path d="M10 1h6l3 3v15h-6l-3-3zM10 1l3 3h6M13 4v15" fill="#fff" />
    </Svg>
  );

const TabBar = () => {
  const [active, setActive] = useState('Assembly 1');
  return (
    <footer className="flex h-8 shrink-0 bg-[#cfcfcf]">
      <button type="button" aria-label="Insert new tab" className="flex w-11 shrink-0 items-center bg-[#d5d5d5] pl-2.5">
        <Svg className="size-[18px]" box="0 0 18 18"><path d="M9 1v16M1 9h16" stroke="#666" strokeWidth="2.600" /></Svg>
      </button>
      <div className="relative flex min-w-0 flex-1 gap-0.5 overflow-hidden pb-px">
        {tabs.map(([name, kind]) => (
          <button
            key={name}
            type="button"
            onClick={() => setActive(name)}
            className={`flex shrink-0 items-center gap-1.5 rounded-b-md px-3 text-[15px] ${
              active === name ? 'border-b-2 border-[#1651b0] bg-white pt-0.5 text-[#333]' : 'bg-[#e9e9e9] text-[#6b6b6b]'
            }`}
          >
            <TabIcon kind={kind} />
            <span className="whitespace-nowrap">{name}</span>
          </button>
        ))}
        <button type="button" aria-label="Next tab" className="flex shrink-0 items-center rounded-b-md bg-[#e9e9e9] px-3">
          <TabIcon kind="studio" />
        </button>
        <span className="pointer-events-none absolute inset-y-0 right-0 w-6 bg-linear-to-r from-transparent to-[#888]/80" />
      </div>
      <div className="flex w-[53px] shrink-0 items-center justify-between bg-[#d5d5d5] pl-2 pr-1.5">
        <button type="button" aria-label="Scroll tabs left">
          <Svg className="h-[18px] w-2.5" box="0 0 10 18"><path d="M8 1L2 9l6 8" stroke="#aaa" strokeWidth="2.400" /></Svg>
        </button>
        <button type="button" aria-label="Scroll tabs right">
          <Svg className="h-[18px] w-2.5" box="0 0 10 18"><path d="M2 1l6 8-6 8" stroke="#555" strokeWidth="2.400" /></Svg>
        </button>
      </div>
    </footer>
  );
};

export default function App() {
  return (
    <div className="relative flex h-screen flex-col overflow-hidden bg-white font-['Open_Sans',sans-serif]">
      <Header />
      <div className="flex min-h-0 flex-1">
        <Rail />
        <div className="flex min-w-0 flex-1 flex-col">
          <Toolbar />
          <div className="flex min-h-0 flex-1">
            <InstancePanel />
            <Viewport />
          </div>
          <TabBar />
        </div>
      </div>
      <div className="pointer-events-none absolute left-1/2 top-14 flex h-[62px] w-[432px] -translate-x-1/2 items-center justify-center gap-2 bg-[#b3b9b7]/30 pr-2 font-['Noto_Sans'] text-[17px] text-white">
        <span>To exit full screen, press and hold</span>
        <kbd className="flex h-[42px] items-center rounded-sm border-2 border-white/70 px-1.5 font-['Noto_Sans']">Esc</kbd>
      </div>
    </div>
  );
}
